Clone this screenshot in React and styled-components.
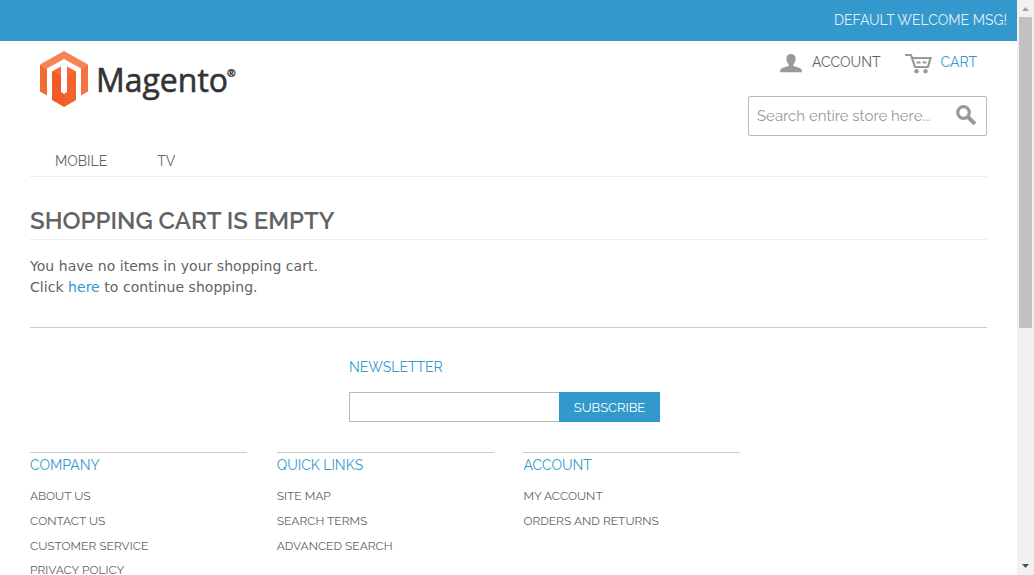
import React from 'react';
import styled, { createGlobalStyle } from 'styled-components';

const BLUE = '#3399cc';
const GRAY = '#636363';
const display = `Raleway, Lato, sans-serif`;

const Global = createGlobalStyle`
  * { box-sizing: border-box; }
  html, body { margin: 0; height: 100%; overflow: hidden; background: #fff; }
  body { font-family: Verdana, 'DejaVu Sans', sans-serif; color: ${GRAY}; }
  a { text-decoration: none; }
`;

const Viewport = styled.div`
  display: flex;
  width: 100%;
  height: 100vh;
  overflow: hidden;
`;

const Page = styled.div`
  flex: 1;
  min-width: 0;
`;

const Label = styled.span`
  display: inline-block;
  font-family: ${display};
  font-weight: 400;
  font-size: ${p => p.$size || 14}px;
  line-height: 20px;
  color: ${p => p.$color || GRAY};
  white-space: nowrap;
`;

const WelcomeBar = styled.div`
  display: flex;
  justify-content: flex-end;
  height: 41px;
  padding: 10px 10px 0 0;
  background: ${BLUE};
`;

const Container = styled.div`
  padding: 0 30px;
`;

const Header = styled.header`
  display: flex;
  justify-content: space-between;
  height: 104px;
`;

const Logo = styled.a`
  display: block;
  padding: 10px 0 0 10px;
  svg { display: block; }
`;

const HeaderTools = styled.div`
  width: 239px;
  padding-top: 11px;
`;

const AccountLinks = styled.nav`
  display: flex;
  align-items: flex-start;
  height: 44px;
  padding-left: 32px;
`;

const AccountLink = styled.a`
  display: flex;
  align-items: flex-start;
  gap: ${p => p.$gap}px;
  width: ${p => p.$width}px;
  svg { display: block; flex: none; margin-top: 1px; }
`;

const SearchBox = styled.form`
  display: flex;
  align-items: flex-start;
  height: 40px;
  padding: 9px 10px 0 8px;
  border: 1px solid #b8b8b8;
  border-radius: 2px;
  justify-content: space-between;
  svg { margin-top: -1px; }
`;

const Nav = styled.nav`
  display: flex;
  gap: 50px;
  height: 32px;
  padding: 6px 25px 0;
  border-bottom: 1px solid #ededed;
`;

const Title = styled.h1`
  margin: 0;
  height: 63px;
  padding-top: 29px;
  font-family: ${display};
  font-weight: 600;
  font-size: 24px;
  line-height: 30px;
  text-transform: uppercase;
  border-bottom: 1px solid #ededed;
`;

const Message = styled.p`
  margin: 0;
  padding-top: 16px;
  height: 87px;
  font-size: 14px;
  line-height: 21px;
  letter-spacing: 0.04px;
  a { color: ${BLUE}; }
`;

const Footer = styled.footer`
  border-top: 1px solid #cccccc;
`;

const Newsletter = styled.section`
  width: 311px;
  height: 124px;
  margin-left: 319px;
  padding-top: 29px;
`;

const SubscribeRow = styled.form`
  display: flex;
  margin-top: 15px;
`;

const EmailInput = styled.input`
  flex: 1;
  min-width: 0;
  height: 30px;
  margin: 0;
  border: 1px solid #b8b8b8;
  border-right: 0;
  border-radius: 0;
  background: #fff;
`;

const SubscribeButton = styled.button`
  width: 101px;
  height: 30px;
  padding: 2px 0 0;
  border: 0;
  background: ${BLUE};
`;

const LinkColumns = styled.div`
  display: grid;
  grid-template-columns: repeat(3, 217px);
  column-gap: 29.7px;
`;

const Column = styled.section`
  border-top: 1px solid #cccccc;
  padding-top: 2px;
`;

const LinkList = styled.ul`
  list-style: none;
  margin: 8px 0 0;
  padding: 0;
  li { height: 24.8px; padding-top: 3px; display: flex; }
`;

const Scrollbar = styled.aside`
  display: flex;
  flex-direction: column;
  align-items: center;
  width: 17px;
  background: #f1f1f1;
`;

const Arrow = styled.svg`
  display: block;
  flex: none;
  width: 17px;
  height: 17px;
  fill: ${p => p.$color};
`;

const Thumb = styled.div`
  width: 13px;
  height: 311px;
  margin-bottom: auto;
  background: #c1c1c1;
`;

const MagentoLogo = () => (
  <svg width="200" height="60" viewBox="0 0 200 60">
    <path fill="#f26a32" d="M0 13.500L7 17.500V44.500L0 40.500z" />
    <path fill="#f58450" d="M0 13.500L24 0l24 13.500-7 4L24 8 7 17.500z" />
    <path fill="#f37440" d="M48 13.500L41 17.500V44.500l7-4z" />
    <path fill="#f15a24" d="M12 20.500l9-5V41l3 2 3-2V15.500l9 5V49l-12 7-12-7z" />
    <path fill="#f58450" fillOpacity=".45" d="M12 20.500l9-5V25zM27 15.500l9 5-9 4.500z" />
    <path fill="#f58450" fillOpacity=".2" d="M24 43l3-2V25l9-4.500V49l-12 7z" />
    <text x="56" y="40.600" fontFamily="'Open Sans'" fontWeight="500" fontSize="33" fill="#333" stroke="#333" strokeWidth=".6" textLength="132" lengthAdjust="spacingAndGlyphs">Magento</text>
    <text x="187" y="25.500" fontFamily="'Open Sans'" fontWeight="700" fontSize="10.500" fill="#222" stroke="#222" strokeWidth=".3">®</text>
  </svg>
);

const UserIcon = () => (
  <svg width="22" height="20" viewBox="0 0 22 20">
    <path fill="#999" d="M11 1c3 0 4.600 1.900 4.600 4.700 0 2.300-1 4.400-2.200 5.400v1.700c1.500 1 5.300 1.700 7 2.700 1.100.600 1.600 1.600 1.600 3.700H0c0-2.100.500-3.100 1.600-3.700 1.700-1 5.500-1.700 7-2.700v-1.700C7.400 10.100 6.400 8 6.400 5.700 6.400 2.900 8 1 11 1z" />
  </svg>
);

const CartIcon = () => (
  <svg width="28" height="21" viewBox="0 0 28 21" fill="none" stroke="#999">
    <path strokeWidth="2.200" d="M0 2h6l4 12H23.500M7 5H25.500l-2.500 9" />
    <path strokeWidth="2" d="M11.500 9.500h4M17.500 9.500h4" />
    <circle cx="11.500" cy="18.200" r="2.200" fill="#999" stroke="none" />
    <circle cx="20.500" cy="18.200" r="2.200" fill="#999" stroke="none" />
  </svg>
);

const SearchIcon = () => (
  <svg width="20" height="20" viewBox="0 0 20 20" fill="none" stroke="#999">
    <circle cx="7.500" cy="7.500" r="5.800" strokeWidth="3.200" />
    <path d="M12 12l7 7" strokeWidth="4" />
  </svg>
);

const columns = [
  { title: 'COMPANY', links: ['ABOUT US', 'CONTACT US', 'CUSTOMER SERVICE', 'PRIVACY POLICY'] },
  { title: 'QUICK LINKS', links: ['SITE MAP', 'SEARCH TERMS', 'ADVANCED SEARCH'] },
  { title: 'ACCOUNT', links: ['MY ACCOUNT', 'ORDERS AND RETURNS'] },
];

export default function App() {
  return (
    <Viewport>
      <Global />
      <Page>
        <WelcomeBar><Label $color="#e4eff6">DEFAULT WELCOME MSG!</Label></WelcomeBar>
        <Container>
          <Header>
            <Logo href="#"><MagentoLogo /></Logo>
            <HeaderTools>
              <AccountLinks>
                <AccountLink href="#" $gap={10} $width={125}><UserIcon /><Label>ACCOUNT</Label></AccountLink>
                <AccountLink href="#" $gap={7.5} $width={73}><CartIcon /><Label $color={BLUE}>CART</Label></AccountLink>
              </AccountLinks>
              <SearchBox>
                <Label $size={15} $color="#999">Search entire store here...</Label>
                <SearchIcon />
              </SearchBox>
            </HeaderTools>
          </Header>
          <Nav><Label>MOBILE</Label><Label>TV</Label></Nav>
          <Title>Shopping Cart is Empty</Title>
          <Message>You have no items in your shopping cart.<br />Click <a href="#">here</a> to continue shopping.</Message>
          <Footer>
            <Newsletter>
              <Label $color={BLUE}>NEWSLETTER</Label>
              <SubscribeRow>
                <EmailInput />
                <SubscribeButton type="button"><Label $size={13} $color="#fff">SUBSCRIBE</Label></SubscribeButton>
              </SubscribeRow>
            </Newsletter>
            <LinkColumns>
              {columns.map(c => (
                <Column key={c.title}>
                  <Label $color={BLUE}>{c.title}</Label>
                  <LinkList>
                    {c.links.map(l => <li key={l}><Label $size={12}>{l}</Label></li>)}
                  </LinkList>
                </Column>
              ))}
            </LinkColumns>
          </Footer>
        </Container>
      </Page>
      <Scrollbar>
        <Arrow viewBox="0 0 17 17" $color="#a3a3a3"><path d="M5 11h7L8.500 7z" /></Arrow>
        <Thumb />
        <Arrow viewBox="0 0 17 17" $color="#505050"><path d="M5 6h7L8.500 10z" /></Arrow>
      </Scrollbar>
    </Viewport>
  );
}
